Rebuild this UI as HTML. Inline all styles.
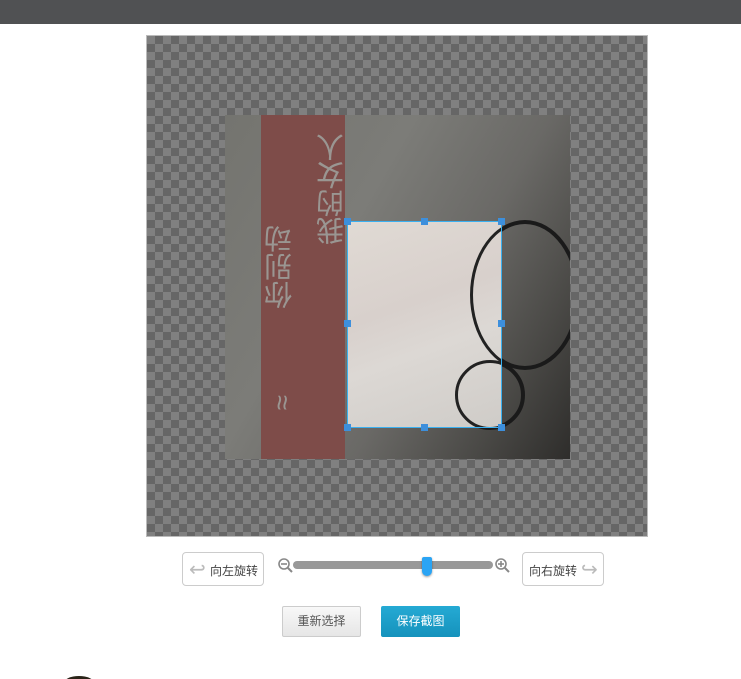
<!DOCTYPE html>
<html style="width:741px;height:679px;overflow:hidden"><head><meta charset="utf-8"><style>
*{margin:0;padding:0;box-sizing:border-box}
body{width:741px;height:679px;background:#fff;position:relative;overflow:hidden;font-family:"Liberation Sans","Noto Sans CJK SC",sans-serif}
.hdr{position:absolute;left:0;top:0;width:741px;height:24px;background:#505153}
.cv{position:absolute;left:146px;top:35px;width:502px;height:502px;border:1px solid #bbb;
background-color:#808080;background-image:linear-gradient(45deg,#666 25%,transparent 25%,transparent 75%,#666 75%),linear-gradient(45deg,#666 25%,transparent 25%,transparent 75%,#666 75%);background-size:16px 16px;background-position:0 0,8px 8px}
.img{position:absolute;left:225px;top:115px;width:345px;height:344px;overflow:hidden;
background:linear-gradient(120deg,#74746f 0%,#7c7c78 35%,#6a6966 60%,#4a4946 82%,#2e2d2b 100%)}
.red{position:absolute;left:36px;top:0;width:84px;height:344px;background:#7e4c49}
.rt{position:absolute;color:#9a9692;font-size:28px;writing-mode:vertical-rl;line-height:30px}
.crop{position:absolute;left:347px;top:221px;width:155px;height:207px;border:1px solid #3ab0f0;
background:linear-gradient(160deg,#e0dad4 0%,#d8d0cc 40%,#dcd8d4 60%,#cfccc8 100%);overflow:hidden}
.h{position:absolute;width:7px;height:7px;background:#3d8fdc}
.btn{position:absolute;border:1px solid #ccc;border-radius:4px;background:#fff;font-size:12px;color:#444}
</style></head><body>
<div class="hdr"></div>
<div class="cv"></div>
<div class="img"><div class="red"></div><div class="rt" style="left:92px;top:18px;transform:rotate(180deg)">我的女人</div><div class="rt" style="left:40px;top:110px;transform:rotate(180deg)">你别动</div>
<div class="rt" style="left:42px;top:280px">≈</div>
<div style="position:absolute;left:245px;top:105px;width:110px;height:150px;border:4px solid #1a1a1a;border-radius:50%"></div>
<div style="position:absolute;left:230px;top:245px;width:70px;height:70px;border:4px solid #1a1a1a;border-radius:50%"></div></div>
<div class="crop">
<div style="position:absolute;left:122px;top:-2px;width:110px;height:150px;border:3px solid #222;border-radius:50%"></div>
<div style="position:absolute;left:107px;top:138px;width:70px;height:70px;border:3px solid #222;border-radius:50%"></div>
</div>
<div class="h" style="left:344px;top:218px"></div><div class="h" style="left:421px;top:218px"></div><div class="h" style="left:498px;top:218px"></div>
<div class="h" style="left:344px;top:320px"></div><div class="h" style="left:498px;top:320px"></div>
<div class="h" style="left:344px;top:424px"></div><div class="h" style="left:421px;top:424px"></div><div class="h" style="left:498px;top:424px"></div>

<div class="btn" style="left:182px;top:552px;width:82px;height:34px"><span style="position:absolute;left:6px;top:4px;font-size:20px;color:#bbb">↩</span><span style="position:absolute;left:27px;top:9px">向左旋转</span></div>
<div class="btn" style="left:522px;top:552px;width:82px;height:34px"><span style="position:absolute;left:6px;top:9px">向右旋转</span><span style="position:absolute;left:58px;top:4px;font-size:20px;color:#bbb">↪</span></div>
<svg style="position:absolute;left:277px;top:557px" width="16" height="18"><circle cx="7" cy="7" r="5" fill="none" stroke="#888" stroke-width="1.6"/><line x1="4" y1="7" x2="10" y2="7" stroke="#888" stroke-width="1.6"/><line x1="11" y1="11" x2="15" y2="15" stroke="#888" stroke-width="2"/></svg>
<svg style="position:absolute;left:494px;top:557px" width="16" height="18"><circle cx="7" cy="7" r="5" fill="none" stroke="#888" stroke-width="1.6"/><line x1="4" y1="7" x2="10" y2="7" stroke="#888" stroke-width="1.6"/><line x1="7" y1="4" x2="7" y2="10" stroke="#888" stroke-width="1.6"/><line x1="11" y1="11" x2="15" y2="15" stroke="#888" stroke-width="2"/></svg>
<div style="position:absolute;left:293px;top:561px;width:200px;height:8px;border-radius:4px;background:#999"></div>
<div style="position:absolute;left:422px;top:557px;width:10px;height:19px;border-radius:2px 2px 5px 5px;background:#2aa4f4;box-shadow:0 1px 2px rgba(0,0,0,.4)"></div>
<div class="btn" style="left:282px;top:606px;width:79px;height:31px;border-radius:2px;background:linear-gradient(#f8f8f8,#e6e6e6);text-align:center;line-height:29px;color:#555">重新选择</div>
<div style="position:absolute;left:381px;top:606px;width:79px;height:31px;border-radius:2px;background:linear-gradient(#25aad4,#1592bc);color:#fff;font-size:12px;text-align:center;line-height:31px">保存截图</div>
<div style="position:absolute;left:64px;top:676px;width:30px;height:14px;border-radius:50%;background:#2a2418"></div>
</body></html>
